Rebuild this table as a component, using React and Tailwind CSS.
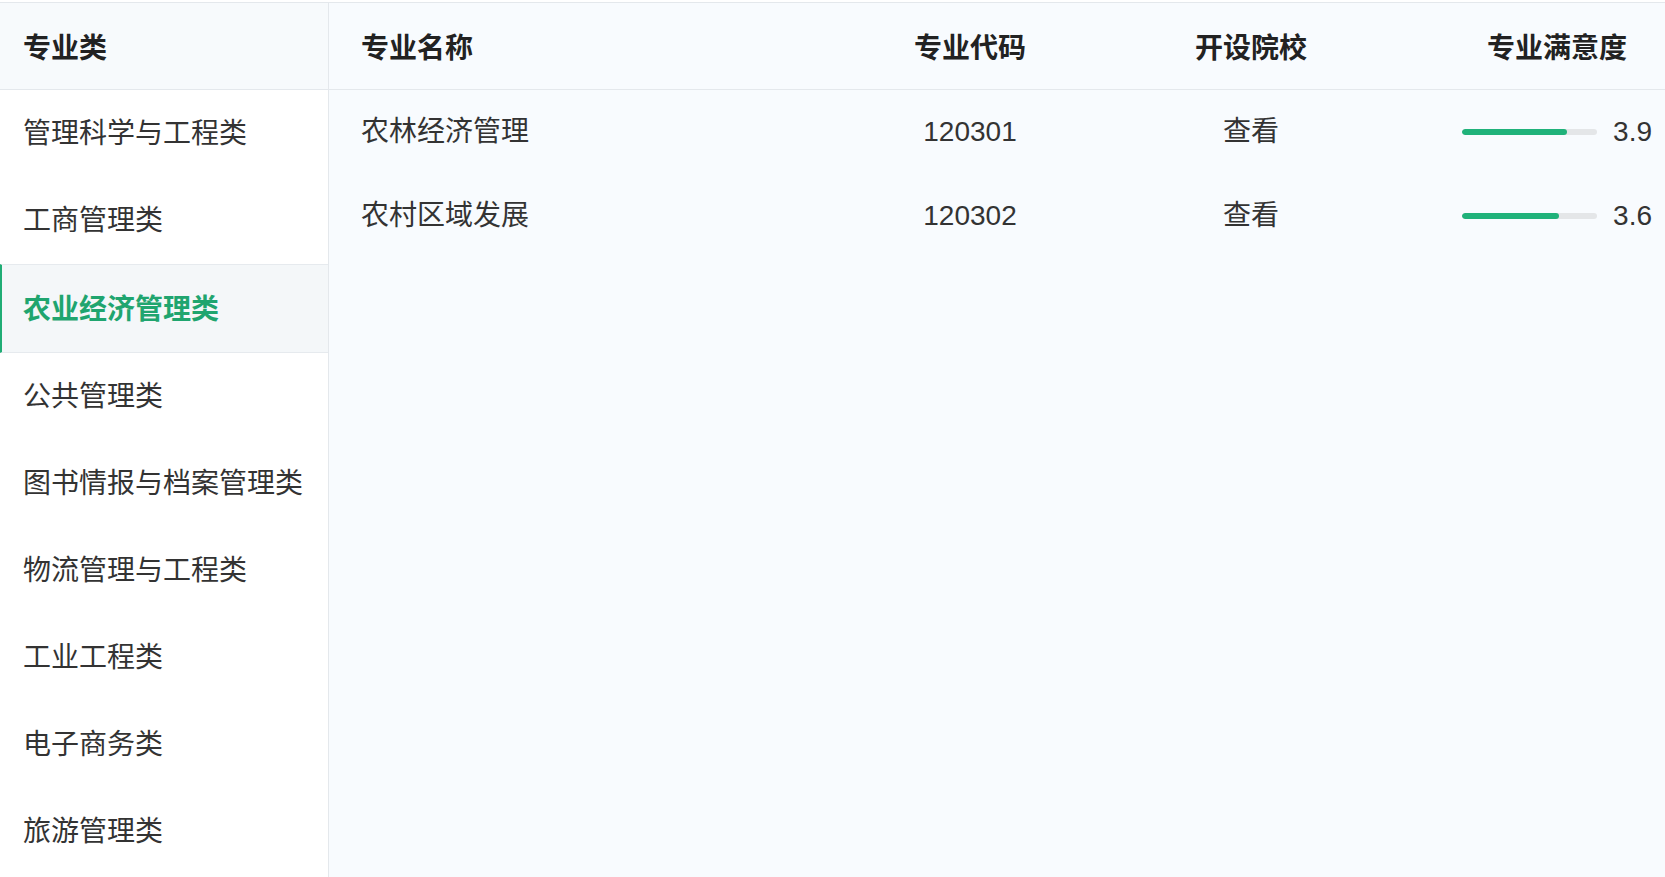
import React, { useState } from "react";

const categories = [
  "管理科学与工程类",
  "工商管理类",
  "农业经济管理类",
  "公共管理类",
  "图书情报与档案管理类",
  "物流管理与工程类",
  "工业工程类",
  "电子商务类",
  "旅游管理类",
];

const majors = [
  { name: "农林经济管理", code: "120301", score: 3.9 },
  { name: "农村区域发展", code: "120302", score: 3.6 },
];

const App = () => {
  const [active, setActive] = useState(2);
  return (
    <div
      className="w-[1665px] h-[877px] overflow-hidden bg-white text-[#333] text-[28px]"
      style={{ fontFamily: '"Liberation Sans", "Noto Sans CJK SC", sans-serif' }}
    >
      <div className="h-[2px] bg-white" />
      <div className="flex h-[875px] border-t border-[#e4e8ec]">
        {/* left: category list */}
        <div className="w-[329px] shrink-0 border-r border-[#e4e8ec] bg-white">
          <div className="h-[87px] flex items-center pl-[23px] pt-[5px] bg-[#f7fafc] border-b border-[#e4e8ec] font-bold text-[#222]">
            专业类
          </div>
          {categories.map((c, i) => {
            const on = i === active;
            return (
              <div
                key={c}
                onClick={() => setActive(i)}
                className={
                  on
                    ? "h-[89px] flex items-center pl-[21px] pt-[2px] bg-[#f4f7f9] border-l-2 border-y border-l-[#20ad75] border-y-[#e6eaee] font-bold text-[#1fa56f] cursor-pointer"
                    : "h-[87px] flex items-center pl-[23px] cursor-pointer"
                }
              >
                {c}
              </div>
            );
          })}
        </div>

        {/* right: majors table */}
        <div className="flex-1 bg-[#f8fbfe]">
          <div className="h-[87px] flex items-center pl-[32px] pr-[13px] pt-[5px] border-b border-[#e4e8ec] font-bold text-[#222]">
            <div className="w-[539px]">专业名称</div>
            <div className="w-[140px] text-center">专业代码</div>
            <div className="w-[422px] text-center">开设院校</div>
            <div className="w-[190px] text-center">专业满意度</div>
          </div>
          {majors.map((m) => (
            <div key={m.code} className="h-[84px] flex items-center pl-[32px] pr-[13px]">
              <div className="w-[539px]">{m.name}</div>
              <div className="w-[140px] text-center">{m.code}</div>
              <div className="w-[422px] text-center cursor-pointer">查看</div>
              <div className="w-[190px] flex items-center justify-center gap-[16px]">
                <div className="w-[138px] h-[6px] rounded-full bg-[#e4e6e8] overflow-hidden">
                  <div
                    className="h-full rounded-full bg-[#20b27a]"
                    style={{ width: `${(m.score / 5) * 100}%` }}
                  />
                </div>
                <span>{m.score.toFixed(1)}</span>
              </div>
            </div>
          ))}
        </div>
      </div>
    </div>
  );
};

export default App;
